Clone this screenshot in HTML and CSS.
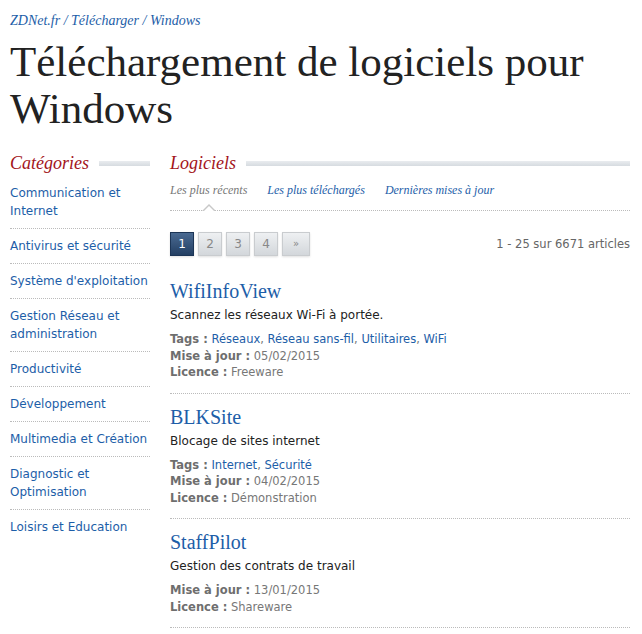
FILE: index.html
```html
<!DOCTYPE html>
<html lang="fr">
<head>
<meta charset="utf-8">
<title>Téléchargement de logiciels pour Windows</title>
<link rel="stylesheet" href="styles.css">
</head>
<body>
<div class="page">
  <nav class="crumbs"><a href="#">ZDNet.fr</a> / <a href="#">Télécharger</a> / <a href="#">Windows</a></nav>
  <h1 class="title">Téléchargement de logiciels pour Windows</h1>
  <div class="cols">
    <aside class="side">
      <h2 class="sec">Catégories</h2>
      <ul class="cats">
        <li><a href="#">Communication et Internet</a></li>
        <li><a href="#">Antivirus et sécurité</a></li>
        <li><a href="#">Système d'exploitation</a></li>
        <li><a href="#">Gestion Réseau et administration</a></li>
        <li><a href="#">Productivité</a></li>
        <li><a href="#">Développement</a></li>
        <li><a href="#">Multimedia et Création</a></li>
        <li><a href="#">Diagnostic et Optimisation</a></li>
        <li><a href="#">Loisirs et Education</a></li>
      </ul>
    </aside>
    <main class="main">
      <h2 class="sec">Logiciels</h2>
      <ul class="tabs">
        <li class="tab active">Les plus récents</li>
        <li class="tab"><a href="#">Les plus téléchargés</a></li>
        <li class="tab"><a href="#">Dernières mises à jour</a></li>
      </ul>
      <div class="pager-row">
        <div class="pager">
          <a class="pg current" href="#">1</a>
          <a class="pg" href="#">2</a>
          <a class="pg" href="#">3</a>
          <a class="pg" href="#">4</a>
          <a class="pg next" href="#">»</a>
        </div>
        <div class="count">1 - 25 sur 6671 articles</div>
      </div>
      <article class="item">
        <h3 class="item-title"><a href="#">WifiInfoView</a></h3>
        <p class="desc">Scannez les réseaux Wi-Fi à portée.</p>
        <p class="meta"><b>Tags :</b> <a href="#">Réseaux</a>, <a href="#">Réseau sans-fil</a>, <a href="#">Utilitaires</a>, <a href="#">WiFi</a></p>
        <p class="meta"><b>Mise à jour :</b> 05/02/2015</p>
        <p class="meta"><b>Licence :</b> Freeware</p>
      </article>
      <article class="item">
        <h3 class="item-title"><a href="#">BLKSite</a></h3>
        <p class="desc">Blocage de sites internet</p>
        <p class="meta"><b>Tags :</b> <a href="#">Internet</a>, <a href="#">Sécurité</a></p>
        <p class="meta"><b>Mise à jour :</b> 04/02/2015</p>
        <p class="meta"><b>Licence :</b> Démonstration</p>
      </article>
      <article class="item">
        <h3 class="item-title"><a href="#">StaffPilot</a></h3>
        <p class="desc">Gestion des contrats de travail</p>
        <p class="meta"><b>Mise à jour :</b> 13/01/2015</p>
        <p class="meta"><b>Licence :</b> Shareware</p>
      </article>
    </main>
  </div>
</div>
</body>
</html>
```
FILE: styles.css
```css
html, body {
  margin: 0;
  padding: 0;
  background: #fff;
}
body {
  font-family: "DejaVu Sans", Verdana, sans-serif;
  color: #222;
}
a {
  color: #1d5ea8;
  text-decoration: none;
}
.page {
  padding: 13px 12px 0 10px;
}
.crumbs {
  font-family: "Liberation Serif", Georgia, serif;
  font-style: italic;
  font-size: 14px;
  color: #1d5ea8;
  line-height: 16px;
}
.title {
  font-family: "Liberation Serif", Georgia, serif;
  font-weight: normal;
  font-size: 43px;
  line-height: 47px;
  color: #222;
  margin: 9px 0 20px 0;
}
.cols {
  display: flex;
  gap: 20px;
}
.side {
  width: 140px;
  flex: none;
}
.main {
  flex: 1;
  min-width: 0;
}
.sec {
  display: flex;
  align-items: center;
  font-family: "Liberation Serif", Georgia, serif;
  font-style: italic;
  font-weight: normal;
  font-size: 18px;
  line-height: 22px;
  color: #a3141a;
  margin: 0;
}
.sec::after {
  content: "";
  flex: 1;
  height: 5px;
  margin-left: 10px;
  margin-top: 1px;
  background: linear-gradient(#e9ecef, #d6dbe0);
}
.cats {
  list-style: none;
  margin: 2px 0 0 0;
  padding: 0;
}
.cats li {
  font-size: 12px;
  line-height: 18px;
  padding: 8px 0;
  border-bottom: 1px dotted #bbb;
}
.cats li:last-child {
  border-bottom: none;
}
.tabs {
  list-style: none;
  margin: 8px 0 0 0;
  padding: 0 0 12px 0;
  display: flex;
  gap: 20px;
  border-bottom: 1px dotted #bbb;
  font-family: "Liberation Serif", Georgia, serif;
  font-style: italic;
  font-size: 12px;
  line-height: 16px;
}
.tab {
  position: relative;
}
.tab.active {
  color: #777;
}
.tab.active::before,
.tab.active::after {
  content: "";
  position: absolute;
  left: 50%;
  width: 0;
  height: 0;
  border-style: solid;
  border-color: transparent;
}
.tab.active::before {
  bottom: -13px;
  margin-left: -7px;
  border-width: 0 7px 7px 7px;
  border-bottom-color: #c8c8c8;
}
.tab.active::after {
  bottom: -14px;
  margin-left: -6px;
  border-width: 0 6px 6px 6px;
  border-bottom-color: #fff;
}
.pager-row {
  display: flex;
  justify-content: space-between;
  align-items: center;
  margin-top: 21px;
}
.pager {
  display: flex;
  gap: 4px;
}
.pg {
  display: block;
  width: 22px;
  height: 22px;
  line-height: 22px;
  text-align: center;
  font-size: 12px;
  color: #888;
  border: 1px solid #c9cccf;
  background: linear-gradient(#eef0f2, #d3d7db);
  box-shadow: 0 1px 2px rgba(0,0,0,0.12);
}
.pg.next {
  width: 26px;
  font-size: 10px;
}
.pg.current {
  color: #fff;
  border-color: #1c3556;
  background: linear-gradient(#4a6a92, #233f63);
}
.count {
  font-size: 11.5px;
  color: #666;
}
.item {
  padding: 23px 0 12px 0;
  border-bottom: 1px dotted #bbb;
}
.item + .item {
  padding-top: 11px;
}
.item-title {
  font-family: "Liberation Serif", Georgia, serif;
  font-weight: normal;
  font-size: 20px;
  line-height: 24px;
  margin: 0 0 3px 0;
}
.desc {
  margin: 0 0 7px 0;
  font-size: 12px;
  line-height: 18px;
  color: #222;
}
.meta {
  margin: 0;
  font-size: 11.5px;
  line-height: 16.5px;
  color: #777;
}
.meta b {
  color: #6e6e6e;
}
```
